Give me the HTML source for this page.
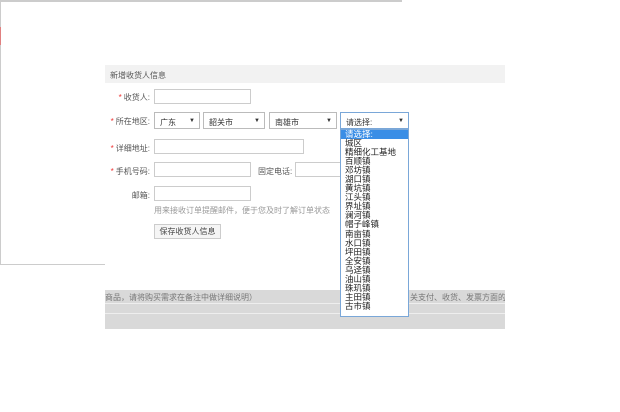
<!DOCTYPE html>
<html><head><meta charset="utf-8"><style>
*{margin:0;padding:0;box-sizing:border-box}
body{width:620px;height:412px;background:#fff;position:relative;overflow:hidden;font-family:"Liberation Sans","Noto Sans CJK SC",sans-serif;font-size:8px;color:#555}
.a{position:absolute}
.inp{position:absolute;border:1px solid #ccc;background:#fff;height:15px}
.lbl{position:absolute;width:60px;text-align:right;left:90px;color:#555}
.lbl b{color:#e33;font-weight:normal;margin-right:2px}
.sel{position:absolute;border:1px solid #bbb;background:#fff;height:17px;top:112px;padding:4px 5px;color:#333}
.sel i{position:absolute;right:4px;top:5px;font-style:normal;font-size:6px}
.list{position:absolute;left:340px;top:129px;width:69px;height:188px;border:1px solid #7aa7d8;background:#fff;color:#222;font-size:8.5px}
.list div{height:9.05px;line-height:9px;padding-left:4px;white-space:nowrap}
</style></head><body>
<div class="a" style="left:0;top:0;width:402px;height:2px;background:#ccc"></div>
<div class="a" style="left:0;top:0;width:1px;height:265px;background:#ccc"></div>
<div class="a" style="left:0;top:27px;width:1px;height:18px;background:#e08080"></div>
<div class="a" style="left:0;top:264px;width:105px;height:1px;background:#ccc"></div>
<div class="a" style="left:105px;top:65px;width:400px;height:18px;background:#f2f2f2;padding:5px 5px;color:#555">新增收货人信息</div>
<div class="lbl" style="top:92px"><b>*</b>收货人:</div>
<div class="inp" style="left:154px;top:89px;width:97px"></div>
<div class="lbl" style="top:116px"><b>*</b>所在地区:</div>
<div class="sel" style="left:154px;width:46px">广东<i>▼</i></div>
<div class="sel" style="left:203px;width:62px">韶关市<i>▼</i></div>
<div class="sel" style="left:269px;width:68px">南雄市<i>▼</i></div>
<div class="sel" style="left:340px;width:69px;border-color:#7aa7d8">请选择:<i>▼</i></div>
<div class="lbl" style="top:143px"><b>*</b>详细地址:</div>
<div class="inp" style="left:154px;top:139px;width:150px"></div>
<div class="lbl" style="top:166px"><b>*</b>手机号码:</div>
<div class="inp" style="left:154px;top:162px;width:97px"></div>
<div class="a" style="left:258px;top:166px">固定电话:</div>
<div class="inp" style="left:295px;top:162px;width:46px"></div>
<div class="lbl" style="top:190px">邮箱:</div>
<div class="inp" style="left:154px;top:186px;width:97px"></div>
<div class="a" style="left:154px;top:205px;color:#999">用来接收订单提醒邮件，便于您及时了解订单状态</div>
<div class="a" style="left:154px;top:224px;width:67px;height:15px;border:1px solid #ccc;background:#f5f5f5;text-align:center;line-height:13px;color:#444">保存收货人信息</div>
<div class="a" style="left:105px;top:290px;width:400px;height:39px;background:#d9d9d9"></div>
<div class="a" style="left:105px;top:303px;width:400px;height:1px;background:#eee"></div>
<div class="a" style="left:105px;top:313px;width:400px;height:1px;background:#eee"></div>
<div class="a" style="left:105px;top:292px;color:#777">商品，请将购买需求在备注中做详细说明）</div>
<div class="a" style="left:410px;top:292px;color:#777;width:95px;overflow:hidden;white-space:nowrap">关支付、收货、发票方面的信息</div>
<div class="list">
<div style="background:#3a8ee6;color:#fff">请选择:</div>
<div>城区</div><div>精细化工基地</div><div>百顺镇</div><div>邓坊镇</div><div>湖口镇</div><div>黄坑镇</div><div>江头镇</div><div>界址镇</div><div>澜河镇</div><div>帽子峰镇</div><div>南亩镇</div><div>水口镇</div><div>坪田镇</div><div>全安镇</div><div>乌迳镇</div><div>油山镇</div><div>珠玑镇</div><div>主田镇</div><div>古市镇</div>
</div>
</body></html>
